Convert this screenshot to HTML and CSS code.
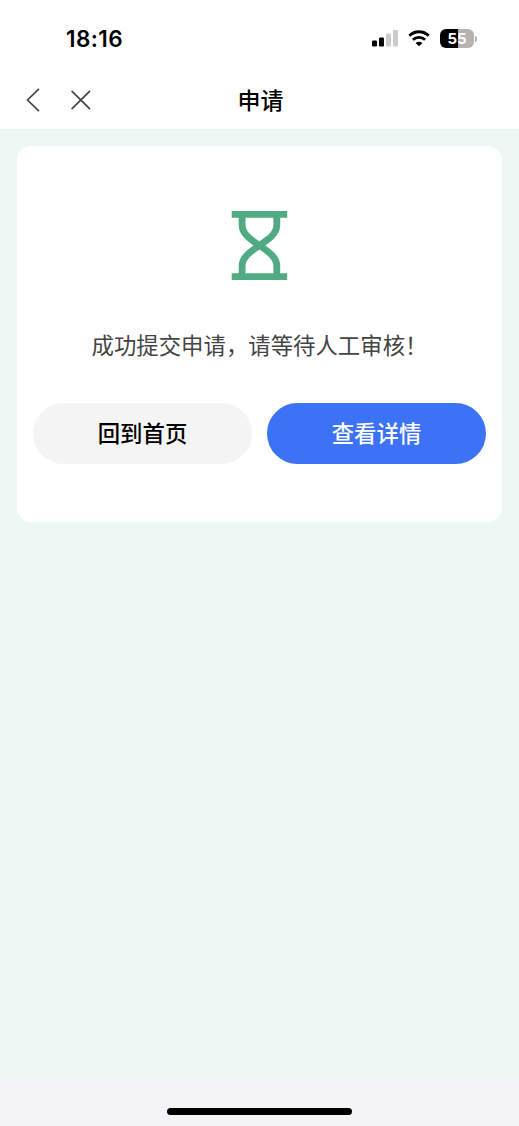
FILE: index.html
```html
<!DOCTYPE html>
<html lang="zh-CN">
<head>
<meta charset="utf-8">
<title>申请</title>
<link rel="stylesheet" href="styles.css">
</head>
<body>
<div class="screen">
  <header class="status">
    <span class="time">18:16</span>
    <div class="indicators">
      <svg class="signal" width="26" height="18" viewBox="0 0 26 18">
        <rect x="0" y="11.5" width="5" height="6" rx="1.3"/>
        <rect x="7" y="8.5" width="5" height="9" rx="1.3"/>
        <rect class="off" x="14" y="4.5" width="5" height="13" rx="1.3"/>
        <rect class="off" x="21" y="1" width="5" height="16.5" rx="1.3"/>
      </svg>
      <svg class="wifi" width="22" height="17" viewBox="0 0 22 17">
        <path d="M1.300 5.700C6.800.4 15.200.4 20.700 5.700M4.900 9.800c3.400-3.300 8.800-3.300 12.200 0" fill="none" stroke="#000" stroke-width="2.800"/>
        <path d="M11 16.300 7.600 12.900c1.900-1.700 4.900-1.700 6.800 0z"/>
      </svg>
      <div class="battery"><span class="level">55</span></div>
      <span class="tip"></span>
    </div>
  </header>
  <nav class="nav">
    <div class="actions">
      <svg width="14" height="24" viewBox="0 0 14 24"><path d="M13 .8 1.500 12 13 23.200"/></svg>
      <svg width="20" height="20" viewBox="0 0 20 20"><path d="m.6.8 18.400 18.400M19 .8.6 19.200"/></svg>
    </div>
    <h1 class="title">申请</h1>
  </nav>
  <main class="content">
    <section class="card">
      <svg class="hourglass" width="57" height="69" viewBox="0 0 57 69">
        <path class="bar" d="M.7 0h55.500v6.800H.7zM.7 62.200h55.500V69H.7z"/>
        <path class="glass" d="M11.100 5v9c0 9 8.400 14.500 17.350 20.500S45.800 46 45.800 55v9M45.800 5v9c0 9-8.400 14.500-17.350 20.500S11.100 46 11.100 55v9"/>
      </svg>
      <p class="message">成功提交申请，请等待人工审核！</p>
      <div class="buttons">
        <button class="btn">回到首页</button>
        <button class="btn primary">查看详情</button>
      </div>
    </section>
  </main>
  <footer class="footer"><span class="home"></span></footer>
</div>
</body>
</html>
```
FILE: styles.css
```css
* { box-sizing: border-box; }
body { margin: 0; font-family: "Noto Sans CJK SC", sans-serif; }
.screen { display: flex; flex-direction: column; height: 1126px; background: #edf7f4; }
.status { display: flex; justify-content: space-between; height: 71px; padding: 24px 42px 0 66px; background: #fff; }
.time { font: 600 22.500px/29px Inter, sans-serif; letter-spacing: 0.4px; }
.indicators { display: flex; align-items: flex-start; padding-top: 5px; }
.signal { margin-right: 10px; }
.signal .off { fill: #ccc; }
.wifi { margin: 1px 10px 0 0; }
.battery { width: 34px; height: 19px; border-radius: 6px; background: linear-gradient(90deg, #000 54%, #b3b3b3 54%); color: #fff; text-align: center; }
.level { display: block; font: 700 15px/19px Inter, sans-serif; }
.tip { width: 2px; height: 6px; margin: 6.500px 0 0 1px; border-radius: 0 2px 2px 0; background: #b3b3b3; }
.nav { display: grid; grid-template-columns: 1fr auto 1fr; align-items: center; height: 58px; padding: 0 26px; background: #fff; }
.actions { display: flex; align-items: center; gap: 31px; }
.actions path { fill: none; stroke: #444; stroke-width: 1.700; }
.title { margin: -2px 0 0; font-size: 23px; line-height: 34px; font-weight: 500; color: #000; padding-left: 2px; }
.content { flex: 1; padding: 17px; }
.card { display: flex; flex-direction: column; align-items: center; height: 376px; padding: 65px 16px 0; border-radius: 14px; background: #fff; }
.hourglass .bar { fill: #50aa82; }
.hourglass .glass { fill: none; stroke: #50aa82; stroke-width: 6.800; }
.message { margin: 47px 0 42px; font-size: 22.400px; line-height: 34px; color: #444; white-space: nowrap; }
.buttons { display: grid; grid-template-columns: 1fr 1fr; gap: 15px; width: 100%; }
.btn { height: 61px; padding: 0 0 4px; border: 0; border-radius: 31px; background: #f4f4f4; color: #000; font: 500 22.400px/34px "Noto Sans CJK SC", sans-serif; }
.primary { background: #3c72f5; color: #fff; }
.footer { display: flex; justify-content: center; height: 46px; padding-top: 27px; border-top: 1px solid #f0f4f4; background: #f4f4f6; }
.home { width: 185px; height: 7px; border-radius: 4px; background: #000; }
```
